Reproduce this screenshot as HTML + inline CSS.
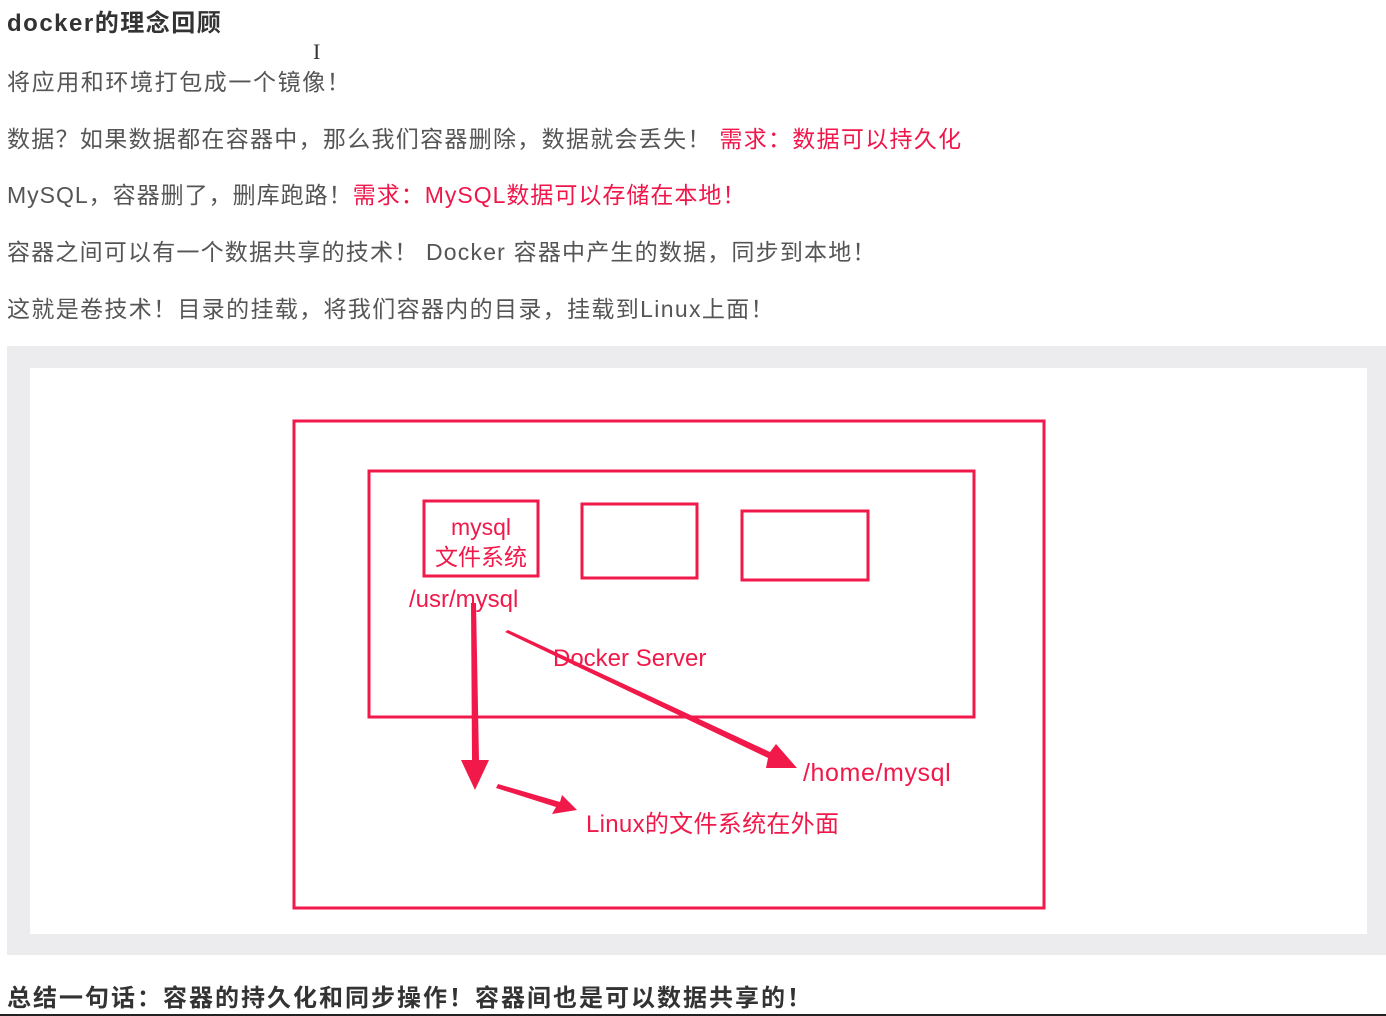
<!DOCTYPE html>
<html><head><meta charset="utf-8"><style>
html,body{margin:0;padding:0;background:#fff;width:1386px;height:1016px;overflow:hidden;position:relative}
.t{position:absolute;left:7px;white-space:nowrap;font-family:"Liberation Sans","Noto Sans CJK SC",sans-serif;font-size:23px;color:#555;line-height:30px;letter-spacing:1.3px}
.r{color:#f0164a}
.b{font-weight:bold;color:#333}
</style></head><body>
<div class="t b" style="top:9px;font-size:24px;letter-spacing:1.5px">docker的理念回顾</div>
<div style="position:absolute;left:313px;top:39px;font-family:'Liberation Serif',serif;font-size:22px;color:#333">I</div>
<div class="t" style="top:67px;letter-spacing:1.6px">将应用和环境打包成一个镜像！</div>
<div class="t" style="top:124px">数据？如果数据都在容器中，那么我们容器删除，数据就会丢失！ <span class="r">需求：数据可以持久化</span></div>
<div class="t" style="top:180px;letter-spacing:1.0px">MySQL，容器删了，删库跑路！<span class="r">需求：MySQL数据可以存储在本地！</span></div>
<div class="t" style="top:237px;letter-spacing:1.2px">容器之间可以有一个数据共享的技术！ Docker 容器中产生的数据，同步到本地！</div>
<div class="t" style="top:294px;letter-spacing:1.35px">这就是卷技术！目录的挂载，将我们容器内的目录，挂载到Linux上面！</div>
<div style="position:absolute;left:7px;top:346px;width:1379px;height:609px;background:#ececee"></div>
<div style="position:absolute;left:30px;top:368px;width:1337px;height:566px;background:#fff"></div>
<svg style="position:absolute;left:0;top:0" width="1386" height="1016" font-family="Liberation Sans, Noto Sans CJK SC, sans-serif">
<g fill="none" stroke="#f0194a" stroke-width="3">
<rect x="294" y="421" width="750" height="487"/>
<rect x="369" y="471" width="605" height="246"/>
<rect x="424" y="501" width="114" height="75"/>
<rect x="582" y="504" width="115" height="74"/>
<rect x="742" y="511" width="126" height="69"/>
</g>
<g fill="#f0194a">
<text x="481" y="535" font-size="23" text-anchor="middle">mysql</text>
<text x="481" y="565" font-size="23" text-anchor="middle">文件系统</text>
<text x="409" y="607" font-size="24">/usr/mysql</text>
<text x="553" y="666" font-size="24">Docker Server</text>
<text x="803" y="781" font-size="25" letter-spacing="0.6">/home/mysql</text>
<text x="586" y="832" font-size="24" letter-spacing="0.3">Linux的文件系统在外面</text>
<polygon points="471,603 476,603 479,760 489,760 475,790 461,760 472,760"/>
<polygon points="505,632 508,630 770,752 776,744 797,768 766,768 768,758"/>
<polygon points="496,788 498,784 560,802 562,795 577,810 552,814 556,807"/>
</g>
</svg>
<div class="t b" style="top:984px;font-size:24px;letter-spacing:2.0px">总结一句话：容器的持久化和同步操作！容器间也是可以数据共享的！</div>
<div style="position:absolute;left:0;top:1014px;width:1386px;height:2px;background:#222"></div>
</body></html>
